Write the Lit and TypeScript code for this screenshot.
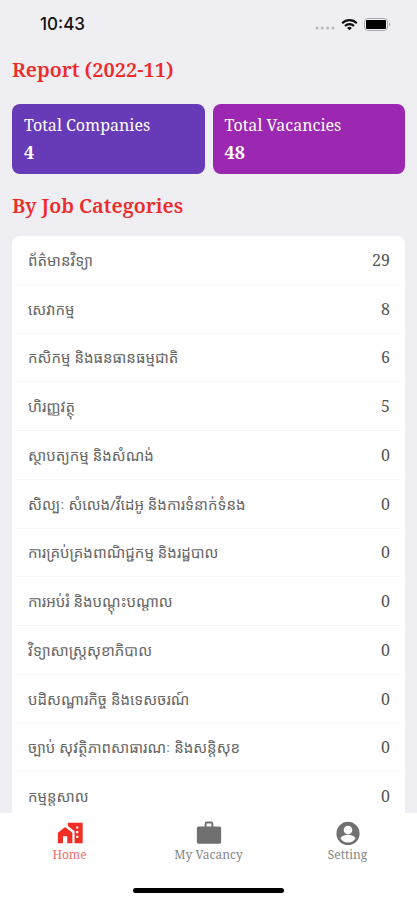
import { LitElement, html, css, svg } from "lit";
import { customElement, state } from "lit/decorators.js";
import { classMap } from "lit/directives/class-map.js";

interface Category {
  name: string;
  count: number;
}

const categories: Category[] = [
  { name: "ព័ត៌មានវិទ្យា", count: 29 },
  { name: "សេវាកម្ម", count: 8 },
  { name: "កសិកម្ម និងធនធានធម្មជាតិ", count: 6 },
  { name: "ហិរញ្ញវត្ថុ", count: 5 },
  { name: "ស្ថាបត្យកម្ម និងសំណង់", count: 0 },
  { name: "សិល្បៈ សំលេង/វីដេអូ និងការទំនាក់ទំនង", count: 0 },
  { name: "ការគ្រប់គ្រងពាណិជ្ជកម្ម និងរដ្ឋបាល", count: 0 },
  { name: "ការអប់រំ និងបណ្តុះបណ្តាល", count: 0 },
  { name: "វិទ្យាសាស្ត្រសុខាភិបាល", count: 0 },
  { name: "បដិសណ្ឋារកិច្ច និងទេសចរណ៍", count: 0 },
  { name: "ច្បាប់ សុវត្ថិភាពសាធារណៈ និងសន្តិសុខ", count: 0 },
  { name: "កម្មន្តសាល", count: 0 },
];

const tabs = [
  {
    label: "Home",
    icon: svg`<path d="M.8 10.800v9.700h4.700v-6.500h4v6.500h4.700V10.800L7.500 5.500z"/><path fill-rule="evenodd" d="M10 1.500v3l6.200 4.800v11.200h7.500v-19zM17.700 5h2v2h-2zM17.700 9.300h2v2h-2zM17.700 13.600h2v2h-2z"/>`,
  },
  {
    label: "My Vacancy",
    icon: svg`<path fill-rule="evenodd" d="M2.500 5H8V2.500A2 2 0 0 1 10 .5h4a2 2 0 0 1 2 2V5h5.500A1.700 1.700 0 0 1 23.200 6.700v12.600a1.700 1.700 0 0 1-1.700 1.700h-19A1.700 1.700 0 0 1 .8 19.300V6.700A1.700 1.700 0 0 1 2.500 5zM9.800 5h4.400V2.300H9.800z"/>`,
  },
  {
    label: "Setting",
    icon: svg`<path fill-rule="evenodd" d="M12 .8a10.700 10.700 0 1 0 0 21.400A10.700 10.700 0 0 0 12 .8zm0 3.500a4 4 0 1 1 0 8 4 4 0 0 1 0-8zm0 15.600a8 8 0 0 1-6.900-3.800c.1-2.300 4.600-3.500 6.900-3.500s6.800 1.200 6.900 3.500a8 8 0 0 1-6.900 3.800z"/>`,
  },
];

@customElement("app-root")
export class AppRoot extends LitElement {
  @state() private active = 0;

  static styles = css`
    :host {
      display: flex;
      flex-direction: column;
      height: 100vh;
      background: #efeef3;
      font-family: "Noto Serif", "Droid Serif", "Noto Sans Khmer", "DejaVu Serif", serif;
      color: #555;
    }
    .status {
      display: flex;
      align-items: center;
      justify-content: space-between;
      flex: none;
      height: 48px;
      padding: 0 26px 0 40px;
      font: 500 17px/48px Inter, "Liberation Sans", sans-serif;
      color: #111;
    }
    .signals {
      display: flex;
      align-items: center;
      gap: 6px;
    }
    .signals svg {
      display: block;
    }
    main {
      flex: 1;
      min-height: 0;
      display: flex;
      flex-direction: column;
      padding: 0 12px;
      overflow: hidden auto;
      scrollbar-width: none;
    }
    h1,
    h2 {
      flex: none;
      margin: 0;
      font-size: 20px;
      line-height: 44px;
      font-weight: 600;
      color: #ee2a2a;
    }
    .totals {
      flex: none;
      display: grid;
      grid-template-columns: 1fr 1fr;
      gap: 8px;
      margin: 12px 0 10px;
    }
    .card {
      padding: 8px 12px;
      border-radius: 8px;
      background: #673ab7;
      color: #fff;
      font-size: 16px;
      line-height: 27px;
    }
    .vacancies {
      background: #9c27b0;
    }
    .card p {
      margin: 0;
    }
    .card .value {
      font-size: 18px;
      font-weight: 700;
    }
    .list {
      flex: 1 0 auto;
      display: grid;
      grid-auto-rows: 1fr;
      margin: 8px 0 -8px;
      padding: 0 4px;
      list-style: none;
      background: #fff;
      border-radius: 8px 8px 0 0;
    }
    .row {
      display: flex;
      align-items: center;
      justify-content: space-between;
      min-height: 40px;
      padding: 0 11px 0 12px;
      border-bottom: 1px solid #f5f5f6;
      font-size: 16px;
      line-height: 24px;
      white-space: nowrap;
    }
    .name {
      font-family: "Noto Sans Khmer", "Noto Serif Khmer", "Noto Serif", serif;
      font-size: 15px;
      color: #666;
    }
    nav {
      position: relative;
      flex: none;
      display: grid;
      grid-template-columns: repeat(3, 1fr);
      padding: 8px 0 7px;
      background: #fff;
    }
    .tab {
      display: flex;
      flex-direction: column;
      align-items: center;
      height: 67px;
      padding: 0;
      border: 0;
      background: none;
      font: inherit;
      font-size: 12px;
      line-height: 16px;
      color: #858585;
      cursor: pointer;
    }
    .tab svg {
      display: block;
      width: 26px;
      height: 26px;
      fill: #707070;
    }
    .active {
      color: #f56b67;
    }
    .active svg {
      fill: #f22d25;
    }
    .indicator {
      grid-column: 1 / -1;
      justify-self: center;
      width: 36%;
      height: 5px;
      border-radius: 3px;
      background: #000;
    }
  `;

  render() {
    return html`
      <header class="status">
        <span>10:43</span>
        <div class="signals">
          <svg width="20" height="12" viewBox="0 0 20 12" fill="#b8b8bd" aria-hidden="true">
            <circle cx="2" cy="10" r="1.500" /><circle cx="7.300" cy="10" r="1.500" />
            <circle cx="12.600" cy="10" r="1.500" /><circle cx="18" cy="10" r="1.500" />
          </svg>
          <svg width="17" height="13" viewBox="0 0 17 13" fill="none" stroke="#111" stroke-width="2.200" aria-hidden="true">
            <path d="M1.200 5.200a10.300 10.300 0 0 1 14.600 0" />
            <path d="M4 8a6.300 6.300 0 0 1 9 0" />
            <path d="M8.500 12.300l-2.400-2.400a3.400 3.400 0 0 1 4.800 0z" fill="#111" stroke="none" />
          </svg>
          <svg width="27" height="13" viewBox="0 0 27 13" aria-hidden="true">
            <rect x=".5" y=".5" width="23" height="12" rx="3.500" fill="none" stroke="#aaaaae" />
            <rect x="2" y="2" width="20" height="9" rx="1" />
            <path d="M25 4.500a2.200 2.200 0 0 1 0 4z" fill="#aaaaae" />
          </svg>
        </div>
      </header>
      <main>
        <h1>Report (2022-11)</h1>
        <section class="totals">
          <div class="card">
            <p>Total Companies</p>
            <p class="value">4</p>
          </div>
          <div class="card vacancies">
            <p>Total Vacancies</p>
            <p class="value">48</p>
          </div>
        </section>
        <h2>By Job Categories</h2>
        <ul class="list">
          ${categories.map(
            (c) => html`<li class="row"><span class="name" lang="km">${c.name}</span><span>${c.count}</span></li>`
          )}
        </ul>
      </main>
      <nav>
        ${tabs.map(
          (t, i) => html`<button
            class=${classMap({ tab: true, active: i === this.active })}
            @click=${() => (this.active = i)}
          >
            <svg viewBox="0 0 24 24" aria-hidden="true">${t.icon}</svg>
            ${t.label}
          </button>`
        )}
        <div class="indicator"></div>
      </nav>
    `;
  }
}
